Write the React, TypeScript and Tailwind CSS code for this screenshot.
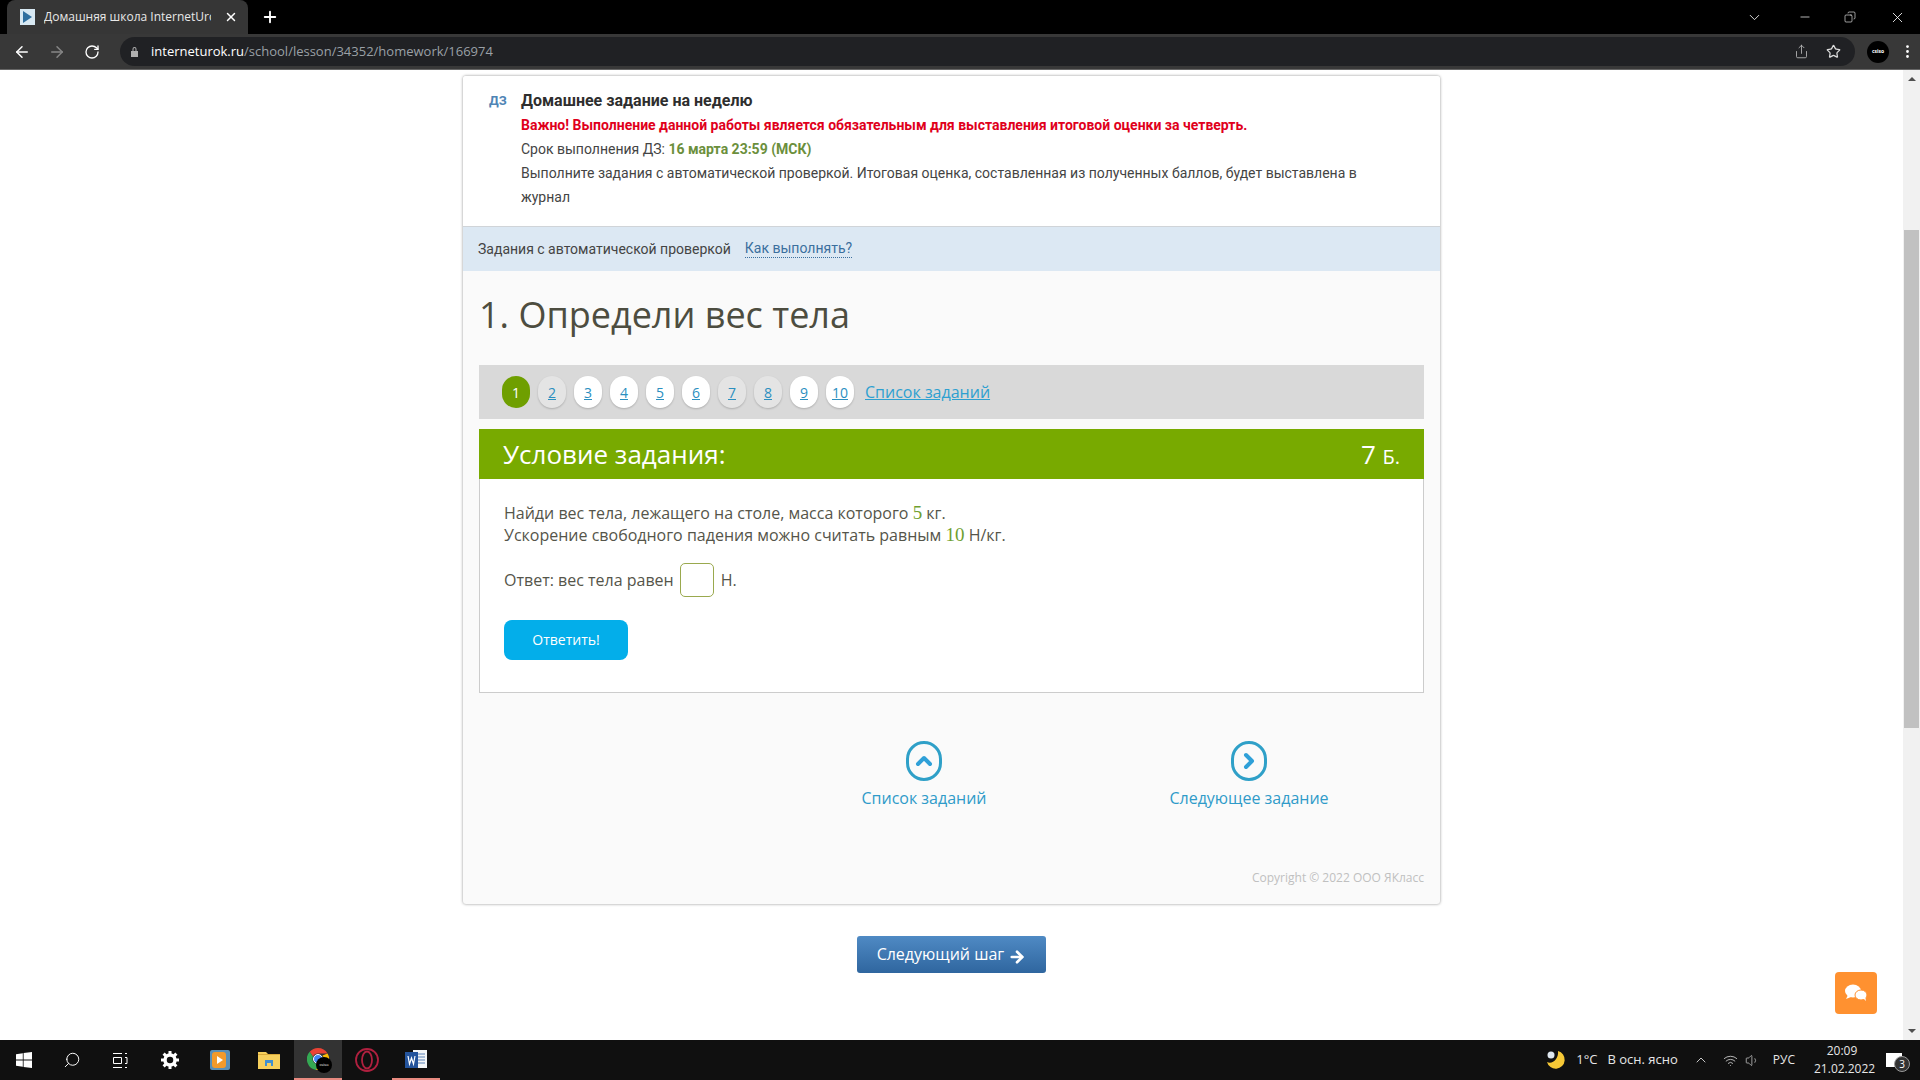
import React from 'react'
import { ArrowLeft, ArrowRight, ChevronDown, ChevronRight, ChevronUp, Copy, EllipsisVertical, Minus, Plus, RotateCw, Search, Share, Star, Volume1, Wifi, X } from 'lucide-react'

const pages = [2, 3, 4, 5, 6, 7, 8, 9, 10]
const visited = [2, 7, 8]

const Browser = () => (
    <>
        <div className="h-[34px] bg-black flex items-end text-white shrink-0">
            <div className="ml-[7px] w-[241px] h-[34px] bg-[#363636] rounded-t-lg flex items-center pl-[13px] pr-[10px]">
                <svg width="15" height="16" viewBox="0 0 15 16" className="shrink-0">
                    <rect width="15" height="16" fill="#d7e8f2" />
                    <path d="M3 2v12l9-6z" fill="#2f6f9f" />
                </svg>
                <span className="ml-[9px] w-[167px] overflow-hidden whitespace-nowrap text-[12px] text-[#e8e8e8]">Домашняя школа InternetUrok.ru</span>
                <X size={14} strokeWidth={2.5} className="ml-auto" />
            </div>
            <Plus size={18} strokeWidth={2.5} className="ml-[13px] mb-[8px]" />
            <div className="ml-auto flex items-center h-full">
                <ChevronDown size={17} strokeWidth={1.2} className="mr-[35px]" />
                <Minus size={14} strokeWidth={1.2} className="mr-[32px]" />
                <Copy size={12} strokeWidth={1.2} className="mr-[33px] -scale-x-100" />
                <X size={17} strokeWidth={1.2} className="mr-[14px]" />
            </div>
        </div>
        <div className="h-[36px] bg-[#383838] border-b border-[#666] flex items-center text-white shrink-0">
            <ArrowLeft size={18} className="ml-[13px]" />
            <ArrowRight size={18} className="ml-[17px] text-[#868686]" />
            <RotateCw size={16} className="ml-[18px]" />
            <div className="ml-[20px] w-[1735px] h-[29px] rounded-full bg-[#202124] flex items-center pl-[10px] pr-[5px]">
                <svg width="9" height="11" viewBox="0 0 9 11" fill="#b0b0b0"><path d="M1 5h7v6H1zM2.5 5V3a2 2 0 0 1 4 0v2H5.5V3a1 1 0 0 0-2 0v2z" /></svg>
                <span className="ml-[12px] text-[13px] text-white">interneturok.ru<span className="text-[#9aa0a6]">/school/lesson/34352/homework/166974</span></span>
                <Share size={15} strokeWidth={1.3} className="ml-auto text-[#c0c0c0]" />
                <Star size={15} strokeWidth={2} className="ml-[17px] mr-[9px] text-[#dcdcdc]" />
            </div>
            <div className="ml-[12px] w-[22px] h-[22px] rounded-full bg-black flex items-center justify-center text-[5px] font-bold text-white">csiso</div>
            <EllipsisVertical size={17} className="ml-[10px]" />
        </div>
    </>
)

const TaskCard = () => (
    <div className="ml-[463px] mt-[6px] w-[977px] h-[828px] bg-[#fafafa] rounded-[3px] shadow-[0_0_3px_rgba(0,0,0,0.45)] font-['Open_Sans',sans-serif]">
        <div className="bg-white h-[150px] pt-[13px] pl-[58px] pr-[50px] relative text-[14px] leading-[24px] text-[#444] font-['Roboto',sans-serif] rounded-t-[3px]">
            <span className="absolute left-[26px] top-[13px] text-[#4f84b5] font-bold text-[13px]">ДЗ</span>
            <div className="text-[16px] font-bold text-[#2e2e2e]">Домашнее задание на неделю</div>
            <div className="font-bold text-[#e0001b]">Важно! Выполнение данной работы является обязательным для выставления итоговой оценки за четверть.</div>
            <div>Срок выполнения ДЗ: <span className="font-bold text-[#6b8f3c]">16 марта 23:59 (МСК)</span></div>
            <div>Выполните задания с автоматической проверкой. Итоговая оценка, составленная из полученных баллов, будет выставлена в журнал</div>
        </div>
        <div className="h-[45px] bg-[#dce8f3] border-t border-[#d0d4d8] flex items-center pl-[15px] text-[14px] text-[#444] font-['Roboto',sans-serif]">
            <span>Задания с автоматической проверкой</span>
            <span className="ml-[14px] text-[#3b6f9e] border-b border-dotted border-[#3b6f9e] leading-[17px]">Как выполнять?</span>
        </div>
        <div className="px-[16px]">
            <h1 className="mt-[22px] h-[44px] text-[36px] leading-[44px] text-[#4d4d40] whitespace-nowrap">1. Определи вес тела</h1>
            <div className="mt-[28px] h-[54px] bg-[#d9d9d9] flex items-center pl-[23px]">
                <div className="w-[28px] h-[32px] rounded-full bg-[#6f9f00] text-white text-[14px] flex items-center justify-center">1</div>
                {pages.map((p) => (
                    <div
                        key={p}
                        className={`ml-[8px] w-[28px] h-[32px] rounded-full shadow-[0_1px_2px_rgba(0,0,0,0.2)] text-[#2b8fbf] text-[14px] underline flex items-center justify-center ${visited.includes(p) ? 'bg-[#e4e4e4]' : 'bg-white'}`}
                    >
                        {p}
                    </div>
                ))}
                <span className="ml-[11px] text-[16px] text-[#2ea0d0] underline">Список заданий</span>
            </div>
            <div className="mt-[10px] h-[50px] bg-[#78aa00] flex items-center justify-between px-[24px] text-white">
                <span className="text-[26px]">Условие задания:</span>
                <span className="text-[26px]">7 <span className="text-[20px]">Б.</span></span>
            </div>
            <div className="h-[214px] bg-white border border-t-0 border-[#ccc] pl-[24px] pt-[23px] text-[16px] leading-[22px] text-[#55554a]">
                <div>Найди вес тела, лежащего на столе, масса которого <span className="font-['Liberation_Serif',serif] text-[#6f9f30] text-[19px]">5</span> кг.</div>
                <div>Ускорение свободного падения можно считать равным <span className="font-['Liberation_Serif',serif] text-[#6f9f30] text-[19px]">10</span> Н/кг.</div>
                <div className="mt-[17px] flex items-center">
                    <span>Ответ: вес тела равен</span>
                    <div className="ml-[6px] w-[34px] h-[34px] rounded-[5px] border border-[#9aa94e] bg-white" />
                    <span className="ml-[7px]">Н.</span>
                </div>
                <button className="mt-[23px] block w-[124px] h-[40px] rounded-[8px] bg-[#03aeea] text-white text-[14px]">Ответить!</button>
            </div>
            <div className="mt-[48px] flex text-[16px] text-[#2f9bc9] leading-[22px]">
                <div className="ml-[345px] w-[200px] flex flex-col items-center">
                    <div className="w-[36px] h-[40px] rounded-full border-[3px] border-[#2fa0c8] flex items-center justify-center"><ChevronUp size={24} strokeWidth={4} className="text-[#2fa0d8]" /></div>
                    <span className="mt-[6px]">Список заданий</span>
                </div>
                <div className="ml-[125px] w-[200px] flex flex-col items-center">
                    <div className="w-[36px] h-[40px] rounded-full border-[3px] border-[#2fa0c8] flex items-center justify-center"><ChevronRight size={24} strokeWidth={4} className="text-[#2fa0d8]" /></div>
                    <span className="mt-[6px]">Следующее задание</span>
                </div>
            </div>
            <div className="mt-[60px] text-right text-[12px] text-[#c0c0c0]">Copyright © 2022 ООО ЯКласс</div>
        </div>
    </div>
)

const Scrollbar = () => (
    <div className="w-[17px] bg-[#f1f1f1] flex flex-col items-center shrink-0">
        <div className="mt-[7px] w-0 h-0 border-x-[4px] border-x-transparent border-b-[4px] border-b-[#505050]" />
        <div className="mt-[149px] w-[15px] h-[498px] bg-[#c1c1c1]" />
        <div className="mt-auto mb-[7px] w-0 h-0 border-x-[4px] border-x-transparent border-t-[4px] border-t-[#505050]" />
    </div>
)

const Taskbar = () => (
    <div className="h-[40px] bg-[#101010] flex items-center text-white shrink-0 font-['Open_Sans',sans-serif]">
        <div className="w-[48px] h-full flex items-center justify-center">
            <svg width="16" height="16" viewBox="0 0 16 16" fill="#fff"><path d="M0 2.2 6.8 1.2v6.4H0zM7.6 1.1 16 0v7.6H7.6zM0 8.4h6.8v6.4L0 13.8zM7.6 8.4H16V16l-8.4-1.1z" /></svg>
        </div>
        <div className="w-[48px] h-full flex items-center justify-center"><Search size={18} strokeWidth={1.3} className="-scale-x-100" /></div>
        <div className="w-[48px] h-full flex items-center justify-center">
            <svg width="16" height="15" viewBox="0 0 16 15" fill="none" stroke="#fff" strokeWidth="1"><path d="M1 .5h9M1 14.500h9M1.500 4.500h8v6h-8zM13 .5h2M13 4.500h2v6h-2M13 14.500h2" /></svg>
        </div>
        <div className="w-[52px] h-full flex items-center justify-center">
            <svg width="18" height="18" viewBox="0 0 18 18"><circle cx="9" cy="9" r="5" fill="none" stroke="#fff" strokeWidth="3.500" /><path d="M9 0v4M9 14v4M0 9h4M14 9h4M2.600 2.600l2.800 2.800M12.600 12.600l2.800 2.800M2.600 15.400l2.800-2.800M12.600 5.400l2.800-2.800" stroke="#fff" strokeWidth="3" /></svg>
        </div>
        <div className="w-[48px] h-full flex items-center justify-center">
            <svg width="20" height="20" viewBox="0 0 20 20"><rect width="20" height="20" rx="2" fill="#5a8fb8" /><rect x="2" y="2" width="14" height="16" rx="3" fill="#f39a2c" /><path d="M7 6v8l6-4z" fill="#fff" /></svg>
        </div>
        <div className="w-[50px] h-full flex items-center justify-center">
            <svg width="22" height="18" viewBox="0 0 22 18"><path d="M0 1h8l2 2h12v15H0z" fill="#f6cf5c" /><rect y="3" width="22" height="1" fill="#d9a93a" /><path d="M7 9h8v6h-2v-3H9v3H7z" fill="#3f8fd0" /></svg>
        </div>
        <div className="w-[48px] h-full bg-[#333] border-b-2 border-[#e88a80] flex items-center justify-center relative">
            <svg width="22" height="22" viewBox="0 0 22 22">
                <path d="M11 0a11 11 0 0 1 9.500 5.500H11a5.500 5.500 0 0 0-5 3.200L2.700 3.800A11 11 0 0 1 11 0z" fill="#ea4335" />
                <path d="M2.700 3.800 6 8.700a5.500 5.500 0 0 0 6 7.700L9 22A11 11 0 0 1 2.700 3.800z" fill="#34a853" />
                <path d="M20.500 5.500A11 11 0 0 1 9 22l3-5.600a5.500 5.500 0 0 0 3.500-8.900z" fill="#fbbc05" />
                <circle cx="11" cy="11" r="4.500" fill="#4285f4" stroke="#fff" strokeWidth="1" />
            </svg>
            <div className="absolute left-[22px] top-[17px] w-[16px] h-[16px] rounded-full bg-black text-[4px] text-white flex items-center justify-center">csiso</div>
        </div>
        <div className="w-[50px] h-full flex items-center justify-center">
            <svg width="24" height="24" viewBox="0 0 24 24" fill="none" stroke="#b0203f" strokeWidth="1.800"><circle cx="12" cy="12" r="11" /><ellipse cx="12" cy="12" rx="5" ry="8.500" /></svg>
        </div>
        <div className="w-[48px] h-full flex items-center justify-center border-b-2 border-[#e88a80]">
            <svg width="22" height="22" viewBox="0 0 22 22"><rect x="8" y="2" width="14" height="18" fill="#f4f6f8" /><path d="M12 6h8M12 9h8M12 12h8M12 15h8" stroke="#5b82b8" /><rect y="4" width="13" height="16" fill="#24549c" /><path d="M3 8l1.500 8 2-6 2 6L10 8" stroke="#fff" fill="none" strokeWidth="1.200" /></svg>
        </div>
        <div className="ml-auto flex items-center h-full text-[13px] text-[#e6e6e6]">
            <svg width="20" height="20" viewBox="0 0 20 20" className="mr-[10px]"><path d="M12 1a9 9 0 1 1-11 11c5 3 12-3 11-11z" fill="#f6c836" /><circle cx="5" cy="5" r="3.500" fill="#dfe7ef" /></svg>
            <span>1°C</span>
            <span className="ml-[10px]">В осн. ясно</span>
            <ChevronUp size={16} strokeWidth={1.3} className="ml-[15px]" />
            <Wifi size={15} strokeWidth={1.4} className="ml-[14px] text-[#ccc]" />
            <Volume1 size={15} strokeWidth={1.2} className="ml-[7px] text-[#ccc]" />
            <span className="ml-[13px] text-[12px]">РУС</span>
            <div className="ml-[19px] w-[56px] text-center text-[12px] leading-[18px]">
                <div>20:09</div>
                <div>21.02.2022</div>
            </div>
            <div className="ml-[16px] mr-[18px] w-[16px] h-[14px] bg-white relative">
                <div className="absolute -right-[8px] top-[3px] w-[16px] h-[16px] rounded-full bg-[#333] border border-[#999] text-[10px] text-white flex items-center justify-center">3</div>
            </div>
        </div>
    </div>
)

export default function App() {
    return (
        <div className="w-[1920px] h-[1080px] flex flex-col overflow-hidden bg-white font-['Open_Sans',sans-serif]">
            <Browser />
            <div className="flex-1 flex min-h-0 relative">
                <div className="flex-1">
                    <TaskCard />
                    <button className="mt-[32px] ml-[857px] block w-[189px] h-[37px] rounded-[3px] bg-gradient-to-b from-[#4f8ac4] to-[#2f669f] text-white text-[16px]">
                        Следующий шаг <span className="inline-block align-[-2px]"><ArrowRight size={18} strokeWidth={3.500} className="inline" /></span>
                    </button>
                </div>
                <Scrollbar />
                <div className="absolute left-[1835px] top-[902px] w-[42px] h-[42px] rounded-[4px] bg-[#ff9130] flex items-center justify-center">
                    <svg width="24" height="20" viewBox="0 0 24 20" fill="#fff"><ellipse cx="9" cy="8" rx="8" ry="6.500" /><ellipse cx="17" cy="12" rx="6" ry="5" stroke="#ff9130" /><path d="M4 12l-2 4 5-2zM19 15l3 3-1-5z" /></svg>
                </div>
            </div>
            <Taskbar />
        </div>
    )
}
